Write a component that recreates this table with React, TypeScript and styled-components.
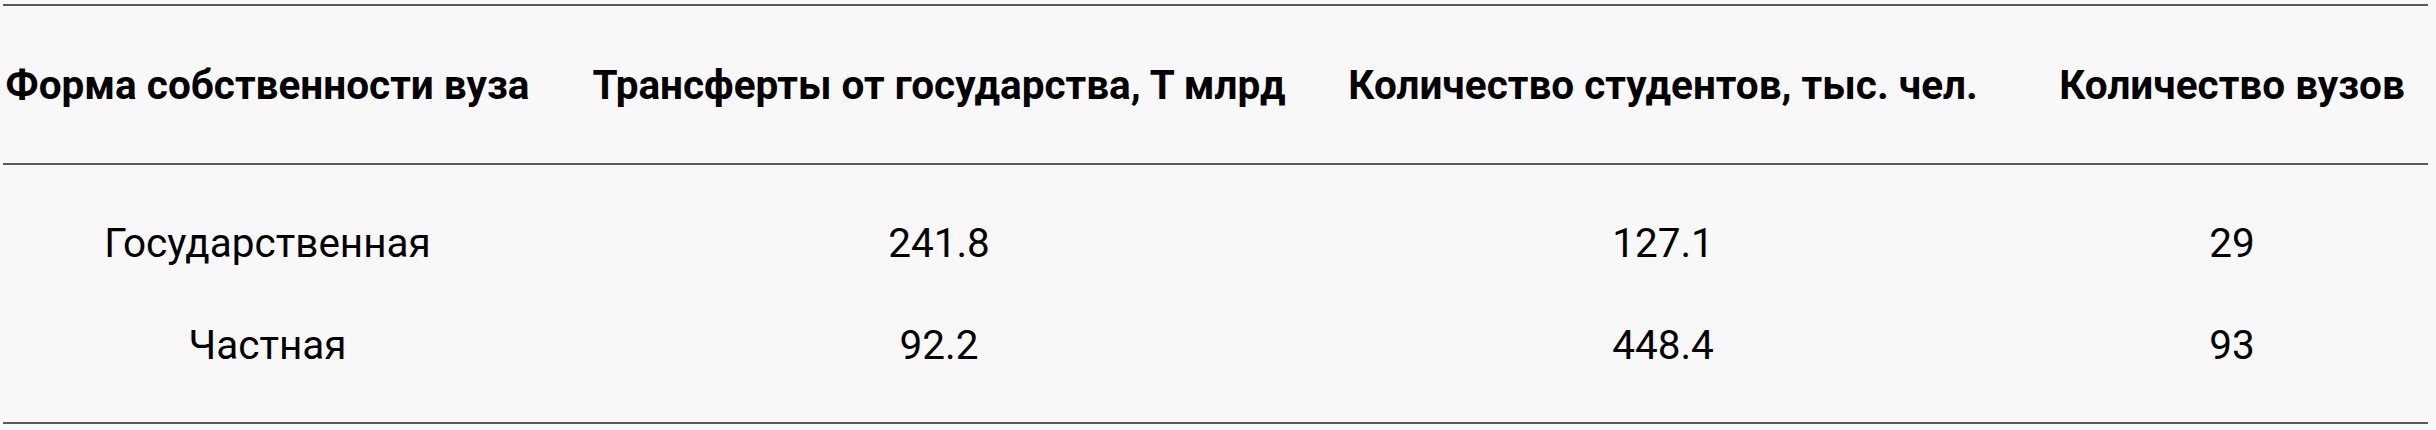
import styled, { createGlobalStyle } from 'styled-components';

const GlobalStyle = createGlobalStyle`
  html, body {
    margin: 0;
    padding: 0;
    background: #f8f8f8;
  }
  body {
    font-family: Roboto, 'Liberation Sans', sans-serif;
    color: #000;
  }
`;

type Row = {
  ownership: string;
  transfers: string;
  students: string;
  universities: string;
};

// данные по вузам
const rows: Row[] = [
  { ownership: 'Государственная', transfers: '241.8', students: '127.1', universities: '29' },
  { ownership: 'Частная', transfers: '92.2', students: '448.4', universities: '93' },
];

const App = () => {
  return (
    <Wrapper>
      <GlobalStyle />
      <Table>
        <colgroup>
          <col style={{ width: 529 }} />
          <col style={{ width: 814 }} />
          <col style={{ width: 634 }} />
          <col />
        </colgroup>
        <thead>
          <tr>
            <HeadCell>Форма собственности вуза</HeadCell>
            <HeadCell>Трансферты от государства, Т млрд</HeadCell>
            <HeadCell>Количество студентов, тыс. чел.</HeadCell>
            <HeadCell $last>Количество вузов</HeadCell>
          </tr>
        </thead>
        <tbody>
          {rows.map((row) => (
            <BodyRow key={row.ownership}>
              <Cell>{row.ownership}</Cell>
              <Cell>{row.transfers}</Cell>
              <Cell>{row.students}</Cell>
              <Cell $last>{row.universities}</Cell>
            </BodyRow>
          ))}
        </tbody>
      </Table>
    </Wrapper>
  );
};

export default App;

const Wrapper = styled.div`
  padding: 4px 8px 0 3px;
`;

const Table = styled.table`
  width: 2425px;
  table-layout: fixed;
  border-collapse: collapse;
  border-top: 2px solid #5a5a5a;
  border-bottom: 2px solid #5a5a5a;
  font-size: 40.5px;
  line-height: normal;

  thead tr {
    border-bottom: 2px solid #5a5a5a;
  }
`;

const HeadCell = styled.th<{ $last?: boolean }>`
  padding: 55px 0 54px;
  padding-left: ${(p) => (p.$last ? '56px' : '0')};
  font-weight: 700;
  text-align: center;
  white-space: nowrap;
`;

const BodyRow = styled.tr`
  td {
    padding-top: 27px;
    padding-bottom: 27px;
  }

  &:first-child td {
    padding-top: 54px;
  }

  &:last-child td {
    padding-bottom: 53px;
  }
`;

const Cell = styled.td<{ $last?: boolean }>`
  padding-left: ${(p) => (p.$last ? '56px' : '0')};
  padding-right: 0;
  font-weight: 400;
  text-align: center;
  white-space: nowrap;
`;
